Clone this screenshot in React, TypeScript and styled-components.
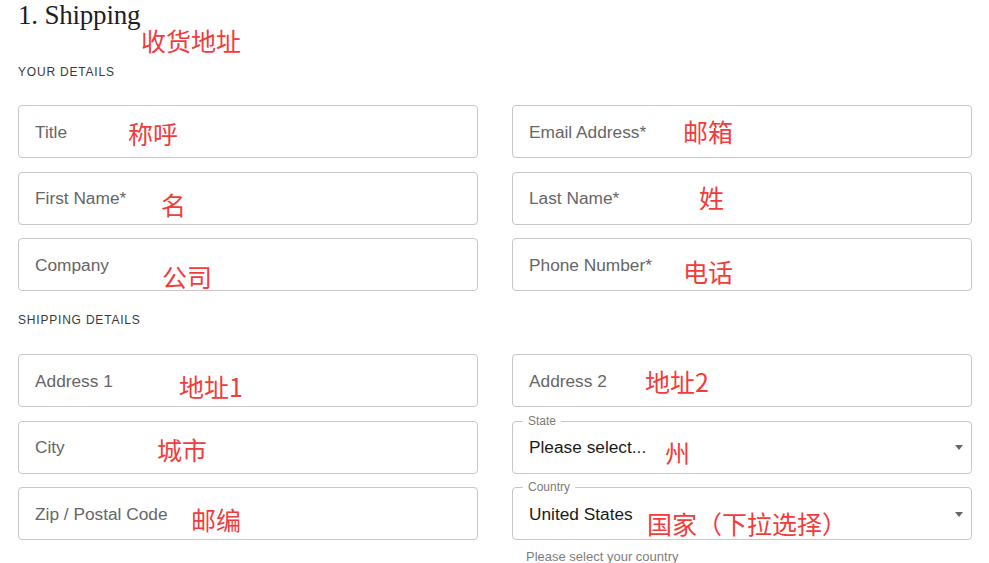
import React from "react";
import styled, { createGlobalStyle } from "styled-components";

const Global = createGlobalStyle`
  html, body { margin: 0; padding: 0; background: #fff; }
  body { font-family: "Liberation Sans", Arial, sans-serif; }
`;

const Page = styled.div`
  padding: 0 18px;
  width: 954px;
`;

const Header = styled.div`
  position: relative;
`;

const Title = styled.h1`
  margin: 0;
  font-family: "Liberation Serif", "Times New Roman", serif;
  font-weight: 400;
  font-size: 27px;
  line-height: 30px;
  color: #1e1e1e;
  letter-spacing: -0.2px;
`;

const Note = styled.span<{ $x: number; $y: number }>`
  position: absolute;
  left: ${(p) => p.$x}px;
  top: ${(p) => p.$y}px;
  font-family: "Noto Sans CJK SC", sans-serif;
  font-size: 25px;
  line-height: 1;
  color: #f23c3c;
  white-space: nowrap;
  pointer-events: none;
`;

const SectionLabel = styled.div<{ $top: number; $bottom: number }>`
  margin-top: ${(p) => p.$top}px;
  margin-bottom: ${(p) => p.$bottom}px;
  font-size: 12px;
  line-height: 16px;
  letter-spacing: 0.8px;
  color: #3a3a3a;
  text-transform: uppercase;
`;

const Grid = styled.div`
  display: grid;
  grid-template-columns: 460px 460px;
  column-gap: 34px;
  row-gap: 13.5px;
  align-items: start;
`;

const Cell = styled.div`
  display: flex;
  flex-direction: column;
`;

const Field = styled.div`
  position: relative;
  box-sizing: border-box;
  height: 53px;
  border: 1px solid #c7c7c7;
  border-radius: 4px;
  display: flex;
  align-items: center;
  justify-content: space-between;
  padding: 0 8px 0 16px;
`;

const Placeholder = styled.span`
  font-size: 17.3px;
  color: #666;
  line-height: 20px;
`;

const Value = styled.span`
  font-size: 17.3px;
  color: #1a1a1a;
  line-height: 20px;
`;

const FloatLabel = styled.span`
  position: absolute;
  left: 10px;
  top: -8px;
  padding: 0 5px;
  background: #fff;
  font-size: 12px;
  line-height: 14px;
  color: #7a7a7a;
`;

const Caret = styled.span`
  width: 0;
  height: 0;
  border-left: 4.5px solid transparent;
  border-right: 4.5px solid transparent;
  border-top: 5px solid #666;
  margin-top: 1px;
`;

const Help = styled.div`
  margin-top: 9px;
  padding-left: 14px;
  font-size: 13px;
  line-height: 15px;
  color: #7d7d7d;
`;

type F = {
  label: string;
  note: string;
  nx: number;
  ny: number;
  select?: string;
  help?: string;
};

const your: F[] = [
  { label: "Title", note: "称呼", nx: 109, ny: 15 },
  { label: "Email Address*", note: "邮箱", nx: 170, ny: 13 },
  { label: "First Name*", note: "名", nx: 142, ny: 19 },
  { label: "Last Name*", note: "姓", nx: 186, ny: 12 },
  { label: "Company", note: "公司", nx: 143, ny: 25 },
  { label: "Phone Number*", note: "电话", nx: 170, ny: 20 },
];

const ship: F[] = [
  { label: "Address 1", note: "地址1", nx: 160, ny: 19 },
  { label: "Address 2", note: "地址2", nx: 132, ny: 14 },
  { label: "City", note: "城市", nx: 138, ny: 15 },
  { label: "State", note: "州", nx: 152, ny: 18, select: "Please select..." },
  { label: "Zip / Postal Code", note: "邮编", nx: 172, ny: 19 },
  {
    label: "Country",
    note: "国家（下拉选择）",
    nx: 134,
    ny: 23,
    select: "United States",
    help: "Please select your country",
  },
];

const FieldView = ({ f }: { f: F }) => (
  <Cell>
    <Field>
      {f.select ? (
        <>
          <FloatLabel>{f.label}</FloatLabel>
          <Value>{f.select}</Value>
          <Caret />
        </>
      ) : (
        <Placeholder>{f.label}</Placeholder>
      )}
      <Note $x={f.nx} $y={f.ny}>
        {f.note}
      </Note>
    </Field>
    {f.help && <Help>{f.help}</Help>}
  </Cell>
);

export default function App() {
  return (
    <Page>
      <Global />
      <Header>
        <Title>1. Shipping</Title>
        <Note $x={123} $y={28}>
          收货地址
        </Note>
      </Header>
      <SectionLabel $top={34} $bottom={25}>
        Your Details
      </SectionLabel>
      <Grid>
        {your.map((f) => (
          <FieldView key={f.label} f={f} />
        ))}
      </Grid>
      <SectionLabel $top={21} $bottom={26}>
        Shipping Details
      </SectionLabel>
      <Grid>
        {ship.map((f) => (
          <FieldView key={f.label} f={f} />
        ))}
      </Grid>
    </Page>
  );
}
